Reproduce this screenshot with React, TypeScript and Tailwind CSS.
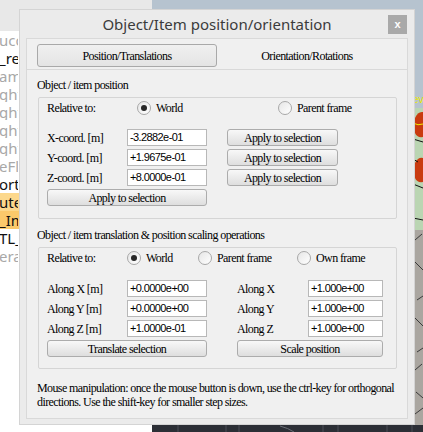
import React from "react";

const serif = "font-['Liberation_Serif',serif] text-[12px] tracking-[-0.6px] text-black";
const sans = "font-['Liberation_Sans',sans-serif]";

function Button({ className, children }: { className: string; children: React.ReactNode }) {
  return (
    <div
      className={`h-[17px] flex items-center justify-center rounded-[3px] border border-[#acacac] bg-linear-to-b from-[#f8f8f8] to-[#dedede] leading-none ${serif} ${className}`}
    >
      {children}
    </div>
  );
}

function Radio({ checked, label, className }: { checked?: boolean; label: string; className: string }) {
  return (
    <div className={`flex items-center gap-[5px] ${className}`}>
      <span className="w-[14px] h-[14px] rounded-full border border-[#a8a8a8] bg-linear-to-br from-[#e6e6e6] to-white flex items-center justify-center">
        {checked && <span className="w-[6px] h-[6px] rounded-full bg-[#262626]" />}
      </span>
      <span>{label}</span>
    </div>
  );
}

function Field({ value, className }: { value: string; className: string }) {
  return (
    <div
      className={`h-[17px] bg-white border border-[#b8b8b8] pl-[2px] flex items-center ${sans} text-[11px] tracking-[-0.6px] text-black ${className}`}
    >
      {value}
    </div>
  );
}

// only the right end of each list entry shows beside the dialog
const listItems = [
  { t: "ucc", dark: false },
  { t: "_re", dark: true },
  { t: "am", dark: false },
  { t: "ght", dark: false },
  { t: "ght", dark: false },
  { t: "ght", dark: false },
  { t: "ght", dark: false },
  { t: "eFl", dark: false },
  { t: "ortl", dark: true },
  { t: "ute_", dark: true, bg: "bg-[#fcd88c]" },
  { t: "_Im", dark: true, bg: "bg-[#fbc96b]" },
  { t: "TL_", dark: true },
  { t: "era", dark: false },
];

function Scene() {
  return (
    <svg width="271" height="432" viewBox="0 0 271 432">
      <rect x="0" y="0" width="271" height="432" fill="#b6c3cf" />
      <text x="261" y="103" fill="#e8e800" fontSize="10" fontFamily="Liberation Sans">ev</text>
      <rect x="254" y="108" width="17" height="124" fill="#bad5b2" />
      <path d="M263 118 Q266 111 271 112 L271 137 Q265 138 263 133 Z" fill="#c93b10" />
      <path d="M263 163 Q266 157 271 158 L271 182 Q265 183 263 178 Z" fill="#c93b10" />
      <path d="M261 123 Q266 126 271 124" stroke="#eeee00" strokeWidth="1" fill="none" />
      <path d="M261 139 L271 142" stroke="#111" strokeWidth="1" fill="none" />
      <path d="M261 159 L266 162" stroke="#111" strokeWidth="1" fill="none" />
      <path d="M261 184 L271 188" stroke="#111" strokeWidth="1" fill="none" />
      <path d="M261 218 L271 220" stroke="#111" strokeWidth="1" fill="none" />
      <rect x="254" y="230" width="17" height="195" fill="#aaa6a0" />
      <path d="M263 240 L270 234 M263 262 L271 270 M265 300 L271 296 M263 318 L271 326 M265 352 L271 348 M263 370 L270 364 M264 392 L271 398 M263 414 L271 408" stroke="#3a3a3a" strokeWidth="1" fill="none" />
      <rect x="0" y="425" width="271" height="7" fill="#2c2f36" />
      <path d="M26 425 V432 M74 425 V432 M87 425 V432 M171 425 V432 M186 425 V432 M235 425 V432 M260 425 V432" stroke="#4a4e56" strokeWidth="1" />
      <path d="M128 426 Q136 428 142 432" stroke="#6a6e76" strokeWidth="1" fill="none" />
    </svg>
  );
}

export default function App() {
  return (
    <div className="relative w-[423px] h-[432px] overflow-hidden flex bg-white">
      <div className="w-[152px] flex flex-col bg-white">
        <div className="h-[31px] bg-[#e8e8e8]" />
        {listItems.map((it, i) => (
          <div key={i} className={`h-[18px] flex items-center ${it.bg ?? ""}`}>
            <div
              className={`w-[19px] overflow-hidden whitespace-nowrap font-['Noto_Sans',sans-serif] text-[15px] leading-none -ml-[1px] ${it.dark ? "text-[#111]" : "text-[#a8a8a8]"}`}
            >
              {it.t}
            </div>
          </div>
        ))}
      </div>
      <div className="flex-1">
        <Scene />
      </div>

      <div className="absolute left-[19px] top-[9px] w-[396px] h-[416px] bg-[#ebebeb] border border-[#d4d4d4] flex flex-col px-[6px]">
        <div className="h-[28px] grid grid-cols-[1fr_auto_1fr] items-center">
          <div />
          <div className="font-['Noto_Sans',sans-serif] text-[15px] text-[#3b3b3b] leading-none">
            Object/Item position/orientation
          </div>
          <div className="justify-self-end mr-[1px] w-[19px] h-[19px] bg-[#a9a9a9] text-white flex items-center justify-center font-['Liberation_Sans',sans-serif] text-[11px] font-bold leading-none">
            x
          </div>
        </div>

        <div className={`h-[381px] bg-[#f0f0f0] border border-[#d9d9d9] flex flex-col ${serif}`}>
          <div className="h-[31px] border-b border-[#d9d9d9] flex pt-[5px] px-[10px]">
            <div className="w-[180px] h-[23px] border border-[#a9a9a9] rounded-[3px] bg-linear-to-b from-[#f0f0f0] to-[#e4e4e4] flex items-center justify-center">
              Position/Translations
            </div>
            <div className="w-[180px] h-[23px] flex items-center justify-center">Orientation/Rotations</div>
          </div>

          <div className="px-[10px] flex flex-col">
            <div className="mt-[8px] h-[14px] leading-[14px]">Object / item position</div>
            <div className="mt-[5px] ml-[1px] w-[359px] h-[122px] border border-[#d5d5d5] rounded-[2px] pl-[8px] flex flex-col">
              <div className="h-[20px] flex items-center">
                <div className="w-[90px]">Relative to:</div>
                <Radio checked label="World" className="w-[141px]" />
                <Radio label="Parent frame" className="" />
              </div>
              <div className="mt-[11px] flex flex-col gap-[3px]">
                {[
                  ["X-coord. [m]", "-3.2882e-01"],
                  ["Y-coord. [m]", "+1.9675e-01"],
                  ["Z-coord. [m]", "+8.0000e-01"],
                ].map(([l, v]) => (
                  <div key={l} className="h-[17px] flex items-center">
                    <div className="w-[80px]">{l}</div>
                    <Field value={v} className="w-[80px]" />
                    <Button className="ml-[20px] w-[111px]">Apply to selection</Button>
                  </div>
                ))}
                <Button className="w-[160px]">Apply to selection</Button>
              </div>
            </div>

            <div className="mt-[9px] h-[14px] leading-[14px]">Object / item translation &amp; position scaling operations</div>
            <div className="mt-[5px] ml-[1px] w-[359px] h-[122px] border border-[#d5d5d5] rounded-[2px] pl-[8px] flex flex-col">
              <div className="h-[20px] flex items-center">
                <div className="w-[80px]">Relative to:</div>
                <Radio checked label="World" className="w-[71px]" />
                <Radio label="Parent frame" className="w-[99px]" />
                <Radio label="Own frame" className="" />
              </div>
              <div className="mt-[12px] flex flex-col gap-[3px]">
                {[
                  ["Along X [m]", "+0.0000e+00", "Along X", "+1.000e+00"],
                  ["Along Y [m]", "+0.0000e+00", "Along Y", "+1.000e+00"],
                  ["Along Z [m]", "+1.0000e-01", "Along Z", "+1.000e+00"],
                ].map(([l, v, l2, v2]) => (
                  <div key={l} className="h-[17px] flex items-center">
                    <div className="w-[80px]">{l}</div>
                    <Field value={v} className="w-[80px]" />
                    <div className="ml-[30px] w-[71px]">{l2}</div>
                    <Field value={v2} className="w-[75px]" />
                  </div>
                ))}
                <div className="h-[17px] flex items-center">
                  <Button className="w-[160px]">Translate selection</Button>
                  <Button className="ml-[30px] w-[146px]">Scale position</Button>
                </div>
              </div>
            </div>

            <div className="mt-[12px] leading-[14px]">
              Mouse manipulation: once the mouse button is down, use the ctrl-key for orthogonal
              <br />
              directions. Use the shift-key for smaller step sizes.
            </div>
          </div>
        </div>
      </div>
    </div>
  );
}
